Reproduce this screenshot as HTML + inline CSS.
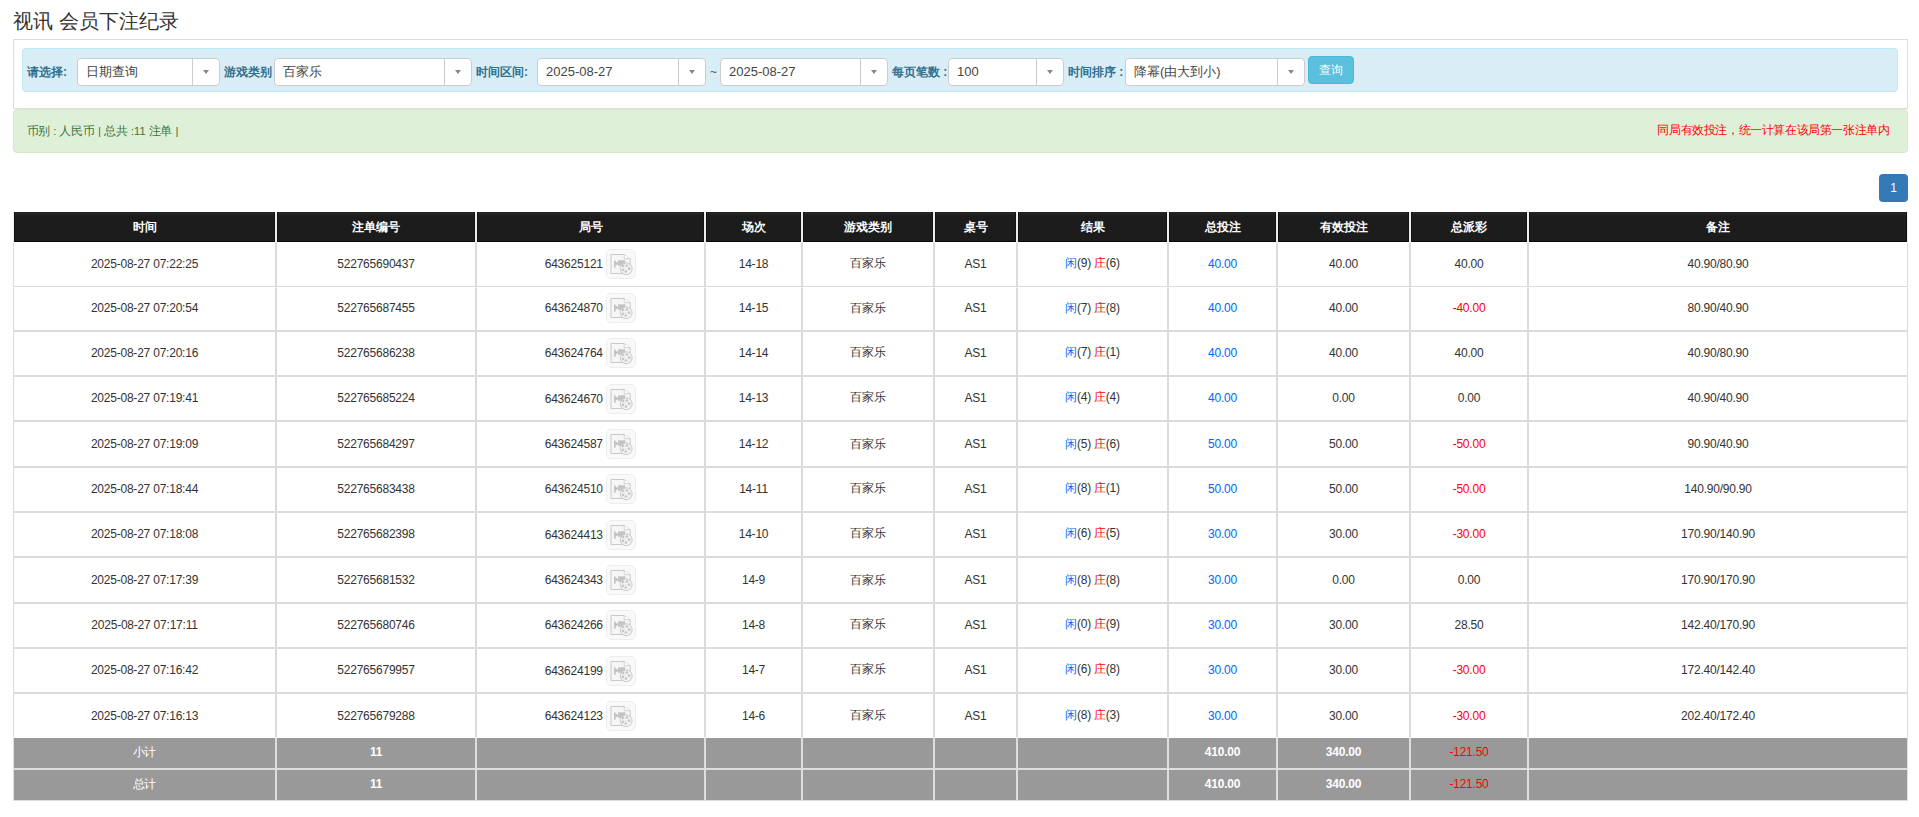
<!DOCTYPE html>
<html><head><meta charset="utf-8">
<style>
*{box-sizing:border-box;margin:0;padding:0}
html,body{width:1919px;height:817px;overflow:hidden;background:#fff}
body{font-family:"Liberation Sans",sans-serif;font-size:12px;color:#333;position:relative}
.title{position:absolute;left:13px;top:8px;font-size:20px;line-height:26px;color:#333}
.panel{position:absolute;left:13px;top:39px;width:1895px;height:70px;border:1px solid #ddd}
.info{position:absolute;left:22px;top:48px;width:1876px;height:44px;background:#d9edf7;border:1px solid #bce8f1;border-radius:4px}
.lbl{position:absolute;top:64px;font-size:12px;line-height:16px;color:#31708f;font-weight:bold}
.sel{position:absolute;top:58px;height:28px;background:#fff;border:1px solid #ccc;border-radius:4px;font-size:13px;line-height:26px;color:#444;padding-left:8px}
.sel .arr{position:absolute;right:0;top:0;width:27px;height:26px;border-left:1px solid #ccc}
.sel .arr:after{content:"";position:absolute;left:10px;top:11px;border-left:3.5px solid transparent;border-right:3.5px solid transparent;border-top:4px solid #888}
.btn{position:absolute;left:1308px;top:56px;width:46px;height:28px;background:#5bc0de;border:1px solid #46b8da;border-radius:4px;color:#fff;font-size:12px;line-height:26px;text-align:center}
.ok{position:absolute;left:13px;top:109px;width:1895px;height:44px;background:#dff0d8;border:1px solid #d6e9c6;border-radius:4px}
.okt{position:absolute;left:26.5px;top:122.5px;font-size:11.6px;letter-spacing:-0.15px;line-height:16px;color:#3c763d}
.okr{position:absolute;right:29.5px;top:122.2px;font-size:11.6px;letter-spacing:-0.4px;line-height:16px;color:#f00}
.page{position:absolute;left:1879px;top:174px;width:29px;height:28px;background:#337ab7;border-radius:4px;color:#fff;font-size:12px;line-height:28px;text-align:center}
.th{position:absolute;top:212px;height:30px;background:#1c1c1c;color:#fff;font-weight:bold;text-align:center;line-height:30px;font-size:12px;border-left:1px solid #ececec;border-right:1px solid #ececec;box-shadow:inset 1px 0 0 #121212,inset -1px 0 0 #121212,inset 0 -1px 0 #080808,inset 0 3px 0 #232323}
.c{position:absolute;text-align:center;display:flex;align-items:center;justify-content:center;font-size:12px;letter-spacing:-0.22px}
.c .in{display:block;white-space:nowrap;position:relative;top:-1px}
.c .in.ij{top:0px}
.td{background:#fff;border:1px solid #dbdbdb;color:#333}
.last{border-bottom-color:#fff}
.r2{border-top-color:#fff}
.tf{background:#999;border:1px solid #dedede;color:#fff;font-weight:bold}
.sub{border-top:none}
.tf .in{top:-1.5px}
.lab{font-weight:normal}
.bl{color:#0066ff}
.rd{color:#f00}
.tf .rd{color:#f00;font-weight:normal}
.ico{display:inline-block;width:30px;height:30px;margin-left:3.5px;vertical-align:middle;position:relative;top:-1px}
.ico svg{display:block}
</style></head><body>
<div class="title">视讯 会员下注纪录</div>
<div class="panel"></div>
<div class="info"></div>
<div class="lbl" style="left:27px">请选择:</div>
<div class="sel" style="left:77px;width:143px">日期查询<span class="arr"></span></div>
<div class="lbl" style="left:224px">游戏类别</div>
<div class="sel" style="left:274px;width:198px">百家乐<span class="arr"></span></div>
<div class="lbl" style="left:476px">时间区间:</div>
<div class="sel" style="left:537px;width:169px">2025-08-27<span class="arr"></span></div>
<div class="lbl" style="left:710px;font-weight:normal;color:#555">~</div>
<div class="sel" style="left:720px;width:168px">2025-08-27<span class="arr"></span></div>
<div class="lbl" style="left:892px">每页笔数 :</div>
<div class="sel" style="left:948px;width:116px">100<span class="arr"></span></div>
<div class="lbl" style="left:1068px">时间排序 :</div>
<div class="sel" style="left:1125px;width:180px">降幂(由大到小)<span class="arr"></span></div>
<div class="btn">查询</div>
<div class="ok"></div>
<div class="okt">币别 : 人民币 | 总共 :11 注单 |</div>
<div class="okr">同局有效投注，统一计算在该局第一张注单内</div>
<div class="page">1</div>
<div class="th" style="left:13px;width:263px">时间</div>
<div class="th" style="left:276px;width:200px">注单编号</div>
<div class="th" style="left:476px;width:229px">局号</div>
<div class="th" style="left:705px;width:97px">场次</div>
<div class="th" style="left:802px;width:132px">游戏类别</div>
<div class="th" style="left:934px;width:83px">桌号</div>
<div class="th" style="left:1017px;width:151px">结果</div>
<div class="th" style="left:1168px;width:109px">总投注</div>
<div class="th" style="left:1277px;width:133px">有效投注</div>
<div class="th" style="left:1410px;width:118px">总派彩</div>
<div class="th" style="left:1528px;width:380px">备注</div>
<div class="c td r2" style="left:13px;top:242px;width:263px;height:45px"><span class="in" style="top:-1px">2025-08-27 07:22:25</span></div>
<div class="c td r2" style="left:276px;top:242px;width:200px;height:45px"><span class="in" style="top:-1px">522765690437</span></div>
<div class="c td r2" style="left:476px;top:242px;width:229px;height:45px"><span class="in ij" style="top:0px">643625121<span class="ico"><svg width="30" height="30" viewBox="0 0 30 30"><rect x="0.5" y="0.5" width="29" height="29" rx="4.5" fill="#f9f9f9" stroke="#ededed"/><path d="M5 5.5h13.2l6 4.2v14.8h-19.2z" fill="#f6f6f6" stroke="#c9c9c9"/><path d="M18.2 5.5v4.2h6" fill="#fdfdfd" stroke="#d0d0d0"/><path d="M8 11.6h1.6v0.8l1.8 1.2h0.6l0-2.4h7.2v5.6h-7.2v-1.4h-0.6l-1.8 1.2v2.2h-1.6z" fill="#c4c4c4"/><circle cx="20.2" cy="19.8" r="5.9" fill="#f3f3f3" stroke="#cacaca"/><circle cx="17.1" cy="16.9" r="1.35" fill="#c6c6c6"/><circle cx="20.9" cy="16.5" r="1.35" fill="#c6c6c6"/><circle cx="23.1" cy="19.7" r="1.35" fill="#c6c6c6"/><circle cx="19.9" cy="22.5" r="1.35" fill="#c6c6c6"/><circle cx="16.9" cy="20.9" r="1.35" fill="#c6c6c6"/><circle cx="19.6" cy="19.4" r="0.5" fill="#d0d0d0"/></svg></span></span></div>
<div class="c td r2" style="left:705px;top:242px;width:97px;height:45px"><span class="in" style="top:-1px">14-18</span></div>
<div class="c td r2" style="left:802px;top:242px;width:132px;height:45px"><span class="in" style="top:-1px">百家乐</span></div>
<div class="c td r2" style="left:934px;top:242px;width:83px;height:45px"><span class="in" style="top:-1px">AS1</span></div>
<div class="c td r2" style="left:1017px;top:242px;width:151px;height:45px"><span class="in" style="top:-1px"><span class="bl">闲</span>(9) <span class="rd">庄</span>(6)</span></div>
<div class="c td r2" style="left:1168px;top:242px;width:109px;height:45px"><span class="in" style="top:-1px"><span class="bl">40.00</span></span></div>
<div class="c td r2" style="left:1277px;top:242px;width:133px;height:45px"><span class="in" style="top:-1px">40.00</span></div>
<div class="c td r2" style="left:1410px;top:242px;width:118px;height:45px"><span class="in" style="top:-1px">40.00</span></div>
<div class="c td r2" style="left:1528px;top:242px;width:380px;height:45px"><span class="in" style="top:-1px">40.90/80.90</span></div>
<div class="c td r2" style="left:13px;top:287px;width:263px;height:44px"><span class="in" style="top:-1px">2025-08-27 07:20:54</span></div>
<div class="c td r2" style="left:276px;top:287px;width:200px;height:44px"><span class="in" style="top:-1px">522765687455</span></div>
<div class="c td r2" style="left:476px;top:287px;width:229px;height:44px"><span class="in ij" style="top:0px">643624870<span class="ico"><svg width="30" height="30" viewBox="0 0 30 30"><rect x="0.5" y="0.5" width="29" height="29" rx="4.5" fill="#f9f9f9" stroke="#ededed"/><path d="M5 5.5h13.2l6 4.2v14.8h-19.2z" fill="#f6f6f6" stroke="#c9c9c9"/><path d="M18.2 5.5v4.2h6" fill="#fdfdfd" stroke="#d0d0d0"/><path d="M8 11.6h1.6v0.8l1.8 1.2h0.6l0-2.4h7.2v5.6h-7.2v-1.4h-0.6l-1.8 1.2v2.2h-1.6z" fill="#c4c4c4"/><circle cx="20.2" cy="19.8" r="5.9" fill="#f3f3f3" stroke="#cacaca"/><circle cx="17.1" cy="16.9" r="1.35" fill="#c6c6c6"/><circle cx="20.9" cy="16.5" r="1.35" fill="#c6c6c6"/><circle cx="23.1" cy="19.7" r="1.35" fill="#c6c6c6"/><circle cx="19.9" cy="22.5" r="1.35" fill="#c6c6c6"/><circle cx="16.9" cy="20.9" r="1.35" fill="#c6c6c6"/><circle cx="19.6" cy="19.4" r="0.5" fill="#d0d0d0"/></svg></span></span></div>
<div class="c td r2" style="left:705px;top:287px;width:97px;height:44px"><span class="in" style="top:-1px">14-15</span></div>
<div class="c td r2" style="left:802px;top:287px;width:132px;height:44px"><span class="in" style="top:-1px">百家乐</span></div>
<div class="c td r2" style="left:934px;top:287px;width:83px;height:44px"><span class="in" style="top:-1px">AS1</span></div>
<div class="c td r2" style="left:1017px;top:287px;width:151px;height:44px"><span class="in" style="top:-1px"><span class="bl">闲</span>(7) <span class="rd">庄</span>(8)</span></div>
<div class="c td r2" style="left:1168px;top:287px;width:109px;height:44px"><span class="in" style="top:-1px"><span class="bl">40.00</span></span></div>
<div class="c td r2" style="left:1277px;top:287px;width:133px;height:44px"><span class="in" style="top:-1px">40.00</span></div>
<div class="c td r2" style="left:1410px;top:287px;width:118px;height:44px"><span class="in" style="top:-1px"><span class="rd">-40.00</span></span></div>
<div class="c td r2" style="left:1528px;top:287px;width:380px;height:44px"><span class="in" style="top:-1px">80.90/40.90</span></div>
<div class="c td" style="left:13px;top:331px;width:263px;height:45px"><span class="in" style="top:-1px">2025-08-27 07:20:16</span></div>
<div class="c td" style="left:276px;top:331px;width:200px;height:45px"><span class="in" style="top:-1px">522765686238</span></div>
<div class="c td" style="left:476px;top:331px;width:229px;height:45px"><span class="in ij" style="top:0px">643624764<span class="ico"><svg width="30" height="30" viewBox="0 0 30 30"><rect x="0.5" y="0.5" width="29" height="29" rx="4.5" fill="#f9f9f9" stroke="#ededed"/><path d="M5 5.5h13.2l6 4.2v14.8h-19.2z" fill="#f6f6f6" stroke="#c9c9c9"/><path d="M18.2 5.5v4.2h6" fill="#fdfdfd" stroke="#d0d0d0"/><path d="M8 11.6h1.6v0.8l1.8 1.2h0.6l0-2.4h7.2v5.6h-7.2v-1.4h-0.6l-1.8 1.2v2.2h-1.6z" fill="#c4c4c4"/><circle cx="20.2" cy="19.8" r="5.9" fill="#f3f3f3" stroke="#cacaca"/><circle cx="17.1" cy="16.9" r="1.35" fill="#c6c6c6"/><circle cx="20.9" cy="16.5" r="1.35" fill="#c6c6c6"/><circle cx="23.1" cy="19.7" r="1.35" fill="#c6c6c6"/><circle cx="19.9" cy="22.5" r="1.35" fill="#c6c6c6"/><circle cx="16.9" cy="20.9" r="1.35" fill="#c6c6c6"/><circle cx="19.6" cy="19.4" r="0.5" fill="#d0d0d0"/></svg></span></span></div>
<div class="c td" style="left:705px;top:331px;width:97px;height:45px"><span class="in" style="top:-1px">14-14</span></div>
<div class="c td" style="left:802px;top:331px;width:132px;height:45px"><span class="in" style="top:-1px">百家乐</span></div>
<div class="c td" style="left:934px;top:331px;width:83px;height:45px"><span class="in" style="top:-1px">AS1</span></div>
<div class="c td" style="left:1017px;top:331px;width:151px;height:45px"><span class="in" style="top:-1px"><span class="bl">闲</span>(7) <span class="rd">庄</span>(1)</span></div>
<div class="c td" style="left:1168px;top:331px;width:109px;height:45px"><span class="in" style="top:-1px"><span class="bl">40.00</span></span></div>
<div class="c td" style="left:1277px;top:331px;width:133px;height:45px"><span class="in" style="top:-1px">40.00</span></div>
<div class="c td" style="left:1410px;top:331px;width:118px;height:45px"><span class="in" style="top:-1px">40.00</span></div>
<div class="c td" style="left:1528px;top:331px;width:380px;height:45px"><span class="in" style="top:-1px">40.90/80.90</span></div>
<div class="c td" style="left:13px;top:376px;width:263px;height:45px"><span class="in" style="top:-1px">2025-08-27 07:19:41</span></div>
<div class="c td" style="left:276px;top:376px;width:200px;height:45px"><span class="in" style="top:-1px">522765685224</span></div>
<div class="c td" style="left:476px;top:376px;width:229px;height:45px"><span class="in ij" style="top:1px">643624670<span class="ico"><svg width="30" height="30" viewBox="0 0 30 30"><rect x="0.5" y="0.5" width="29" height="29" rx="4.5" fill="#f9f9f9" stroke="#ededed"/><path d="M5 5.5h13.2l6 4.2v14.8h-19.2z" fill="#f6f6f6" stroke="#c9c9c9"/><path d="M18.2 5.5v4.2h6" fill="#fdfdfd" stroke="#d0d0d0"/><path d="M8 11.6h1.6v0.8l1.8 1.2h0.6l0-2.4h7.2v5.6h-7.2v-1.4h-0.6l-1.8 1.2v2.2h-1.6z" fill="#c4c4c4"/><circle cx="20.2" cy="19.8" r="5.9" fill="#f3f3f3" stroke="#cacaca"/><circle cx="17.1" cy="16.9" r="1.35" fill="#c6c6c6"/><circle cx="20.9" cy="16.5" r="1.35" fill="#c6c6c6"/><circle cx="23.1" cy="19.7" r="1.35" fill="#c6c6c6"/><circle cx="19.9" cy="22.5" r="1.35" fill="#c6c6c6"/><circle cx="16.9" cy="20.9" r="1.35" fill="#c6c6c6"/><circle cx="19.6" cy="19.4" r="0.5" fill="#d0d0d0"/></svg></span></span></div>
<div class="c td" style="left:705px;top:376px;width:97px;height:45px"><span class="in" style="top:-1px">14-13</span></div>
<div class="c td" style="left:802px;top:376px;width:132px;height:45px"><span class="in" style="top:-1px">百家乐</span></div>
<div class="c td" style="left:934px;top:376px;width:83px;height:45px"><span class="in" style="top:-1px">AS1</span></div>
<div class="c td" style="left:1017px;top:376px;width:151px;height:45px"><span class="in" style="top:-1px"><span class="bl">闲</span>(4) <span class="rd">庄</span>(4)</span></div>
<div class="c td" style="left:1168px;top:376px;width:109px;height:45px"><span class="in" style="top:-1px"><span class="bl">40.00</span></span></div>
<div class="c td" style="left:1277px;top:376px;width:133px;height:45px"><span class="in" style="top:-1px">0.00</span></div>
<div class="c td" style="left:1410px;top:376px;width:118px;height:45px"><span class="in" style="top:-1px">0.00</span></div>
<div class="c td" style="left:1528px;top:376px;width:380px;height:45px"><span class="in" style="top:-1px">40.90/40.90</span></div>
<div class="c td" style="left:13px;top:421px;width:263px;height:46px"><span class="in" style="top:0px">2025-08-27 07:19:09</span></div>
<div class="c td" style="left:276px;top:421px;width:200px;height:46px"><span class="in" style="top:0px">522765684297</span></div>
<div class="c td" style="left:476px;top:421px;width:229px;height:46px"><span class="in ij" style="top:1px">643624587<span class="ico"><svg width="30" height="30" viewBox="0 0 30 30"><rect x="0.5" y="0.5" width="29" height="29" rx="4.5" fill="#f9f9f9" stroke="#ededed"/><path d="M5 5.5h13.2l6 4.2v14.8h-19.2z" fill="#f6f6f6" stroke="#c9c9c9"/><path d="M18.2 5.5v4.2h6" fill="#fdfdfd" stroke="#d0d0d0"/><path d="M8 11.6h1.6v0.8l1.8 1.2h0.6l0-2.4h7.2v5.6h-7.2v-1.4h-0.6l-1.8 1.2v2.2h-1.6z" fill="#c4c4c4"/><circle cx="20.2" cy="19.8" r="5.9" fill="#f3f3f3" stroke="#cacaca"/><circle cx="17.1" cy="16.9" r="1.35" fill="#c6c6c6"/><circle cx="20.9" cy="16.5" r="1.35" fill="#c6c6c6"/><circle cx="23.1" cy="19.7" r="1.35" fill="#c6c6c6"/><circle cx="19.9" cy="22.5" r="1.35" fill="#c6c6c6"/><circle cx="16.9" cy="20.9" r="1.35" fill="#c6c6c6"/><circle cx="19.6" cy="19.4" r="0.5" fill="#d0d0d0"/></svg></span></span></div>
<div class="c td" style="left:705px;top:421px;width:97px;height:46px"><span class="in" style="top:0px">14-12</span></div>
<div class="c td" style="left:802px;top:421px;width:132px;height:46px"><span class="in" style="top:0px">百家乐</span></div>
<div class="c td" style="left:934px;top:421px;width:83px;height:46px"><span class="in" style="top:0px">AS1</span></div>
<div class="c td" style="left:1017px;top:421px;width:151px;height:46px"><span class="in" style="top:0px"><span class="bl">闲</span>(5) <span class="rd">庄</span>(6)</span></div>
<div class="c td" style="left:1168px;top:421px;width:109px;height:46px"><span class="in" style="top:0px"><span class="bl">50.00</span></span></div>
<div class="c td" style="left:1277px;top:421px;width:133px;height:46px"><span class="in" style="top:0px">50.00</span></div>
<div class="c td" style="left:1410px;top:421px;width:118px;height:46px"><span class="in" style="top:0px"><span class="rd">-50.00</span></span></div>
<div class="c td" style="left:1528px;top:421px;width:380px;height:46px"><span class="in" style="top:0px">90.90/40.90</span></div>
<div class="c td" style="left:13px;top:467px;width:263px;height:45px"><span class="in" style="top:-1px">2025-08-27 07:18:44</span></div>
<div class="c td" style="left:276px;top:467px;width:200px;height:45px"><span class="in" style="top:-1px">522765683438</span></div>
<div class="c td" style="left:476px;top:467px;width:229px;height:45px"><span class="in ij" style="top:0px">643624510<span class="ico"><svg width="30" height="30" viewBox="0 0 30 30"><rect x="0.5" y="0.5" width="29" height="29" rx="4.5" fill="#f9f9f9" stroke="#ededed"/><path d="M5 5.5h13.2l6 4.2v14.8h-19.2z" fill="#f6f6f6" stroke="#c9c9c9"/><path d="M18.2 5.5v4.2h6" fill="#fdfdfd" stroke="#d0d0d0"/><path d="M8 11.6h1.6v0.8l1.8 1.2h0.6l0-2.4h7.2v5.6h-7.2v-1.4h-0.6l-1.8 1.2v2.2h-1.6z" fill="#c4c4c4"/><circle cx="20.2" cy="19.8" r="5.9" fill="#f3f3f3" stroke="#cacaca"/><circle cx="17.1" cy="16.9" r="1.35" fill="#c6c6c6"/><circle cx="20.9" cy="16.5" r="1.35" fill="#c6c6c6"/><circle cx="23.1" cy="19.7" r="1.35" fill="#c6c6c6"/><circle cx="19.9" cy="22.5" r="1.35" fill="#c6c6c6"/><circle cx="16.9" cy="20.9" r="1.35" fill="#c6c6c6"/><circle cx="19.6" cy="19.4" r="0.5" fill="#d0d0d0"/></svg></span></span></div>
<div class="c td" style="left:705px;top:467px;width:97px;height:45px"><span class="in" style="top:-1px">14-11</span></div>
<div class="c td" style="left:802px;top:467px;width:132px;height:45px"><span class="in" style="top:-1px">百家乐</span></div>
<div class="c td" style="left:934px;top:467px;width:83px;height:45px"><span class="in" style="top:-1px">AS1</span></div>
<div class="c td" style="left:1017px;top:467px;width:151px;height:45px"><span class="in" style="top:-1px"><span class="bl">闲</span>(8) <span class="rd">庄</span>(1)</span></div>
<div class="c td" style="left:1168px;top:467px;width:109px;height:45px"><span class="in" style="top:-1px"><span class="bl">50.00</span></span></div>
<div class="c td" style="left:1277px;top:467px;width:133px;height:45px"><span class="in" style="top:-1px">50.00</span></div>
<div class="c td" style="left:1410px;top:467px;width:118px;height:45px"><span class="in" style="top:-1px"><span class="rd">-50.00</span></span></div>
<div class="c td" style="left:1528px;top:467px;width:380px;height:45px"><span class="in" style="top:-1px">140.90/90.90</span></div>
<div class="c td" style="left:13px;top:512px;width:263px;height:45px"><span class="in" style="top:-1px">2025-08-27 07:18:08</span></div>
<div class="c td" style="left:276px;top:512px;width:200px;height:45px"><span class="in" style="top:-1px">522765682398</span></div>
<div class="c td" style="left:476px;top:512px;width:229px;height:45px"><span class="in ij" style="top:1px">643624413<span class="ico"><svg width="30" height="30" viewBox="0 0 30 30"><rect x="0.5" y="0.5" width="29" height="29" rx="4.5" fill="#f9f9f9" stroke="#ededed"/><path d="M5 5.5h13.2l6 4.2v14.8h-19.2z" fill="#f6f6f6" stroke="#c9c9c9"/><path d="M18.2 5.5v4.2h6" fill="#fdfdfd" stroke="#d0d0d0"/><path d="M8 11.6h1.6v0.8l1.8 1.2h0.6l0-2.4h7.2v5.6h-7.2v-1.4h-0.6l-1.8 1.2v2.2h-1.6z" fill="#c4c4c4"/><circle cx="20.2" cy="19.8" r="5.9" fill="#f3f3f3" stroke="#cacaca"/><circle cx="17.1" cy="16.9" r="1.35" fill="#c6c6c6"/><circle cx="20.9" cy="16.5" r="1.35" fill="#c6c6c6"/><circle cx="23.1" cy="19.7" r="1.35" fill="#c6c6c6"/><circle cx="19.9" cy="22.5" r="1.35" fill="#c6c6c6"/><circle cx="16.9" cy="20.9" r="1.35" fill="#c6c6c6"/><circle cx="19.6" cy="19.4" r="0.5" fill="#d0d0d0"/></svg></span></span></div>
<div class="c td" style="left:705px;top:512px;width:97px;height:45px"><span class="in" style="top:-1px">14-10</span></div>
<div class="c td" style="left:802px;top:512px;width:132px;height:45px"><span class="in" style="top:-1px">百家乐</span></div>
<div class="c td" style="left:934px;top:512px;width:83px;height:45px"><span class="in" style="top:-1px">AS1</span></div>
<div class="c td" style="left:1017px;top:512px;width:151px;height:45px"><span class="in" style="top:-1px"><span class="bl">闲</span>(6) <span class="rd">庄</span>(5)</span></div>
<div class="c td" style="left:1168px;top:512px;width:109px;height:45px"><span class="in" style="top:-1px"><span class="bl">30.00</span></span></div>
<div class="c td" style="left:1277px;top:512px;width:133px;height:45px"><span class="in" style="top:-1px">30.00</span></div>
<div class="c td" style="left:1410px;top:512px;width:118px;height:45px"><span class="in" style="top:-1px"><span class="rd">-30.00</span></span></div>
<div class="c td" style="left:1528px;top:512px;width:380px;height:45px"><span class="in" style="top:-1px">170.90/140.90</span></div>
<div class="c td" style="left:13px;top:557px;width:263px;height:46px"><span class="in" style="top:0px">2025-08-27 07:17:39</span></div>
<div class="c td" style="left:276px;top:557px;width:200px;height:46px"><span class="in" style="top:0px">522765681532</span></div>
<div class="c td" style="left:476px;top:557px;width:229px;height:46px"><span class="in ij" style="top:1px">643624343<span class="ico"><svg width="30" height="30" viewBox="0 0 30 30"><rect x="0.5" y="0.5" width="29" height="29" rx="4.5" fill="#f9f9f9" stroke="#ededed"/><path d="M5 5.5h13.2l6 4.2v14.8h-19.2z" fill="#f6f6f6" stroke="#c9c9c9"/><path d="M18.2 5.5v4.2h6" fill="#fdfdfd" stroke="#d0d0d0"/><path d="M8 11.6h1.6v0.8l1.8 1.2h0.6l0-2.4h7.2v5.6h-7.2v-1.4h-0.6l-1.8 1.2v2.2h-1.6z" fill="#c4c4c4"/><circle cx="20.2" cy="19.8" r="5.9" fill="#f3f3f3" stroke="#cacaca"/><circle cx="17.1" cy="16.9" r="1.35" fill="#c6c6c6"/><circle cx="20.9" cy="16.5" r="1.35" fill="#c6c6c6"/><circle cx="23.1" cy="19.7" r="1.35" fill="#c6c6c6"/><circle cx="19.9" cy="22.5" r="1.35" fill="#c6c6c6"/><circle cx="16.9" cy="20.9" r="1.35" fill="#c6c6c6"/><circle cx="19.6" cy="19.4" r="0.5" fill="#d0d0d0"/></svg></span></span></div>
<div class="c td" style="left:705px;top:557px;width:97px;height:46px"><span class="in" style="top:0px">14-9</span></div>
<div class="c td" style="left:802px;top:557px;width:132px;height:46px"><span class="in" style="top:0px">百家乐</span></div>
<div class="c td" style="left:934px;top:557px;width:83px;height:46px"><span class="in" style="top:0px">AS1</span></div>
<div class="c td" style="left:1017px;top:557px;width:151px;height:46px"><span class="in" style="top:0px"><span class="bl">闲</span>(8) <span class="rd">庄</span>(8)</span></div>
<div class="c td" style="left:1168px;top:557px;width:109px;height:46px"><span class="in" style="top:0px"><span class="bl">30.00</span></span></div>
<div class="c td" style="left:1277px;top:557px;width:133px;height:46px"><span class="in" style="top:0px">0.00</span></div>
<div class="c td" style="left:1410px;top:557px;width:118px;height:46px"><span class="in" style="top:0px">0.00</span></div>
<div class="c td" style="left:1528px;top:557px;width:380px;height:46px"><span class="in" style="top:0px">170.90/170.90</span></div>
<div class="c td" style="left:13px;top:603px;width:263px;height:45px"><span class="in" style="top:-1px">2025-08-27 07:17:11</span></div>
<div class="c td" style="left:276px;top:603px;width:200px;height:45px"><span class="in" style="top:-1px">522765680746</span></div>
<div class="c td" style="left:476px;top:603px;width:229px;height:45px"><span class="in ij" style="top:0px">643624266<span class="ico"><svg width="30" height="30" viewBox="0 0 30 30"><rect x="0.5" y="0.5" width="29" height="29" rx="4.5" fill="#f9f9f9" stroke="#ededed"/><path d="M5 5.5h13.2l6 4.2v14.8h-19.2z" fill="#f6f6f6" stroke="#c9c9c9"/><path d="M18.2 5.5v4.2h6" fill="#fdfdfd" stroke="#d0d0d0"/><path d="M8 11.6h1.6v0.8l1.8 1.2h0.6l0-2.4h7.2v5.6h-7.2v-1.4h-0.6l-1.8 1.2v2.2h-1.6z" fill="#c4c4c4"/><circle cx="20.2" cy="19.8" r="5.9" fill="#f3f3f3" stroke="#cacaca"/><circle cx="17.1" cy="16.9" r="1.35" fill="#c6c6c6"/><circle cx="20.9" cy="16.5" r="1.35" fill="#c6c6c6"/><circle cx="23.1" cy="19.7" r="1.35" fill="#c6c6c6"/><circle cx="19.9" cy="22.5" r="1.35" fill="#c6c6c6"/><circle cx="16.9" cy="20.9" r="1.35" fill="#c6c6c6"/><circle cx="19.6" cy="19.4" r="0.5" fill="#d0d0d0"/></svg></span></span></div>
<div class="c td" style="left:705px;top:603px;width:97px;height:45px"><span class="in" style="top:-1px">14-8</span></div>
<div class="c td" style="left:802px;top:603px;width:132px;height:45px"><span class="in" style="top:-1px">百家乐</span></div>
<div class="c td" style="left:934px;top:603px;width:83px;height:45px"><span class="in" style="top:-1px">AS1</span></div>
<div class="c td" style="left:1017px;top:603px;width:151px;height:45px"><span class="in" style="top:-1px"><span class="bl">闲</span>(0) <span class="rd">庄</span>(9)</span></div>
<div class="c td" style="left:1168px;top:603px;width:109px;height:45px"><span class="in" style="top:-1px"><span class="bl">30.00</span></span></div>
<div class="c td" style="left:1277px;top:603px;width:133px;height:45px"><span class="in" style="top:-1px">30.00</span></div>
<div class="c td" style="left:1410px;top:603px;width:118px;height:45px"><span class="in" style="top:-1px">28.50</span></div>
<div class="c td" style="left:1528px;top:603px;width:380px;height:45px"><span class="in" style="top:-1px">142.40/170.90</span></div>
<div class="c td" style="left:13px;top:648px;width:263px;height:45px"><span class="in" style="top:-1px">2025-08-27 07:16:42</span></div>
<div class="c td" style="left:276px;top:648px;width:200px;height:45px"><span class="in" style="top:-1px">522765679957</span></div>
<div class="c td" style="left:476px;top:648px;width:229px;height:45px"><span class="in ij" style="top:1px">643624199<span class="ico"><svg width="30" height="30" viewBox="0 0 30 30"><rect x="0.5" y="0.5" width="29" height="29" rx="4.5" fill="#f9f9f9" stroke="#ededed"/><path d="M5 5.5h13.2l6 4.2v14.8h-19.2z" fill="#f6f6f6" stroke="#c9c9c9"/><path d="M18.2 5.5v4.2h6" fill="#fdfdfd" stroke="#d0d0d0"/><path d="M8 11.6h1.6v0.8l1.8 1.2h0.6l0-2.4h7.2v5.6h-7.2v-1.4h-0.6l-1.8 1.2v2.2h-1.6z" fill="#c4c4c4"/><circle cx="20.2" cy="19.8" r="5.9" fill="#f3f3f3" stroke="#cacaca"/><circle cx="17.1" cy="16.9" r="1.35" fill="#c6c6c6"/><circle cx="20.9" cy="16.5" r="1.35" fill="#c6c6c6"/><circle cx="23.1" cy="19.7" r="1.35" fill="#c6c6c6"/><circle cx="19.9" cy="22.5" r="1.35" fill="#c6c6c6"/><circle cx="16.9" cy="20.9" r="1.35" fill="#c6c6c6"/><circle cx="19.6" cy="19.4" r="0.5" fill="#d0d0d0"/></svg></span></span></div>
<div class="c td" style="left:705px;top:648px;width:97px;height:45px"><span class="in" style="top:-1px">14-7</span></div>
<div class="c td" style="left:802px;top:648px;width:132px;height:45px"><span class="in" style="top:-1px">百家乐</span></div>
<div class="c td" style="left:934px;top:648px;width:83px;height:45px"><span class="in" style="top:-1px">AS1</span></div>
<div class="c td" style="left:1017px;top:648px;width:151px;height:45px"><span class="in" style="top:-1px"><span class="bl">闲</span>(6) <span class="rd">庄</span>(8)</span></div>
<div class="c td" style="left:1168px;top:648px;width:109px;height:45px"><span class="in" style="top:-1px"><span class="bl">30.00</span></span></div>
<div class="c td" style="left:1277px;top:648px;width:133px;height:45px"><span class="in" style="top:-1px">30.00</span></div>
<div class="c td" style="left:1410px;top:648px;width:118px;height:45px"><span class="in" style="top:-1px"><span class="rd">-30.00</span></span></div>
<div class="c td" style="left:1528px;top:648px;width:380px;height:45px"><span class="in" style="top:-1px">172.40/142.40</span></div>
<div class="c td last" style="left:13px;top:693px;width:263px;height:45px"><span class="in" style="top:0px">2025-08-27 07:16:13</span></div>
<div class="c td last" style="left:276px;top:693px;width:200px;height:45px"><span class="in" style="top:0px">522765679288</span></div>
<div class="c td last" style="left:476px;top:693px;width:229px;height:45px"><span class="in ij" style="top:1px">643624123<span class="ico"><svg width="30" height="30" viewBox="0 0 30 30"><rect x="0.5" y="0.5" width="29" height="29" rx="4.5" fill="#f9f9f9" stroke="#ededed"/><path d="M5 5.5h13.2l6 4.2v14.8h-19.2z" fill="#f6f6f6" stroke="#c9c9c9"/><path d="M18.2 5.5v4.2h6" fill="#fdfdfd" stroke="#d0d0d0"/><path d="M8 11.6h1.6v0.8l1.8 1.2h0.6l0-2.4h7.2v5.6h-7.2v-1.4h-0.6l-1.8 1.2v2.2h-1.6z" fill="#c4c4c4"/><circle cx="20.2" cy="19.8" r="5.9" fill="#f3f3f3" stroke="#cacaca"/><circle cx="17.1" cy="16.9" r="1.35" fill="#c6c6c6"/><circle cx="20.9" cy="16.5" r="1.35" fill="#c6c6c6"/><circle cx="23.1" cy="19.7" r="1.35" fill="#c6c6c6"/><circle cx="19.9" cy="22.5" r="1.35" fill="#c6c6c6"/><circle cx="16.9" cy="20.9" r="1.35" fill="#c6c6c6"/><circle cx="19.6" cy="19.4" r="0.5" fill="#d0d0d0"/></svg></span></span></div>
<div class="c td last" style="left:705px;top:693px;width:97px;height:45px"><span class="in" style="top:0px">14-6</span></div>
<div class="c td last" style="left:802px;top:693px;width:132px;height:45px"><span class="in" style="top:0px">百家乐</span></div>
<div class="c td last" style="left:934px;top:693px;width:83px;height:45px"><span class="in" style="top:0px">AS1</span></div>
<div class="c td last" style="left:1017px;top:693px;width:151px;height:45px"><span class="in" style="top:0px"><span class="bl">闲</span>(8) <span class="rd">庄</span>(3)</span></div>
<div class="c td last" style="left:1168px;top:693px;width:109px;height:45px"><span class="in" style="top:0px"><span class="bl">30.00</span></span></div>
<div class="c td last" style="left:1277px;top:693px;width:133px;height:45px"><span class="in" style="top:0px">30.00</span></div>
<div class="c td last" style="left:1410px;top:693px;width:118px;height:45px"><span class="in" style="top:0px"><span class="rd">-30.00</span></span></div>
<div class="c td last" style="left:1528px;top:693px;width:380px;height:45px"><span class="in" style="top:0px">202.40/172.40</span></div>
<div class="c tf sub lab" style="left:13px;top:738px;width:263px;height:31px"><span class="in" style="top:-0.5px">小计</span></div>
<div class="c tf sub" style="left:276px;top:738px;width:200px;height:31px"><span class="in" style="top:-1.5px">11</span></div>
<div class="c tf sub" style="left:476px;top:738px;width:229px;height:31px"><span class="in" style="top:-1.5px"></span></div>
<div class="c tf sub" style="left:705px;top:738px;width:97px;height:31px"><span class="in" style="top:-1.5px"></span></div>
<div class="c tf sub" style="left:802px;top:738px;width:132px;height:31px"><span class="in" style="top:-1.5px"></span></div>
<div class="c tf sub" style="left:934px;top:738px;width:83px;height:31px"><span class="in" style="top:-1.5px"></span></div>
<div class="c tf sub" style="left:1017px;top:738px;width:151px;height:31px"><span class="in" style="top:-1.5px"></span></div>
<div class="c tf sub" style="left:1168px;top:738px;width:109px;height:31px"><span class="in" style="top:-1.5px">410.00</span></div>
<div class="c tf sub" style="left:1277px;top:738px;width:133px;height:31px"><span class="in" style="top:-1.5px">340.00</span></div>
<div class="c tf sub" style="left:1410px;top:738px;width:118px;height:31px"><span class="in" style="top:-1.5px"><span class="rd">-121.50</span></span></div>
<div class="c tf sub" style="left:1528px;top:738px;width:380px;height:31px"><span class="in" style="top:-1.5px"></span></div>
<div class="c tf lab" style="left:13px;top:769px;width:263px;height:32px"><span class="in" style="top:-0.5px">总计</span></div>
<div class="c tf" style="left:276px;top:769px;width:200px;height:32px"><span class="in" style="top:-1.5px">11</span></div>
<div class="c tf" style="left:476px;top:769px;width:229px;height:32px"><span class="in" style="top:-1.5px"></span></div>
<div class="c tf" style="left:705px;top:769px;width:97px;height:32px"><span class="in" style="top:-1.5px"></span></div>
<div class="c tf" style="left:802px;top:769px;width:132px;height:32px"><span class="in" style="top:-1.5px"></span></div>
<div class="c tf" style="left:934px;top:769px;width:83px;height:32px"><span class="in" style="top:-1.5px"></span></div>
<div class="c tf" style="left:1017px;top:769px;width:151px;height:32px"><span class="in" style="top:-1.5px"></span></div>
<div class="c tf" style="left:1168px;top:769px;width:109px;height:32px"><span class="in" style="top:-1.5px">410.00</span></div>
<div class="c tf" style="left:1277px;top:769px;width:133px;height:32px"><span class="in" style="top:-1.5px">340.00</span></div>
<div class="c tf" style="left:1410px;top:769px;width:118px;height:32px"><span class="in" style="top:-1.5px"><span class="rd">-121.50</span></span></div>
<div class="c tf" style="left:1528px;top:769px;width:380px;height:32px"><span class="in" style="top:-1.5px"></span></div>
</body></html>
